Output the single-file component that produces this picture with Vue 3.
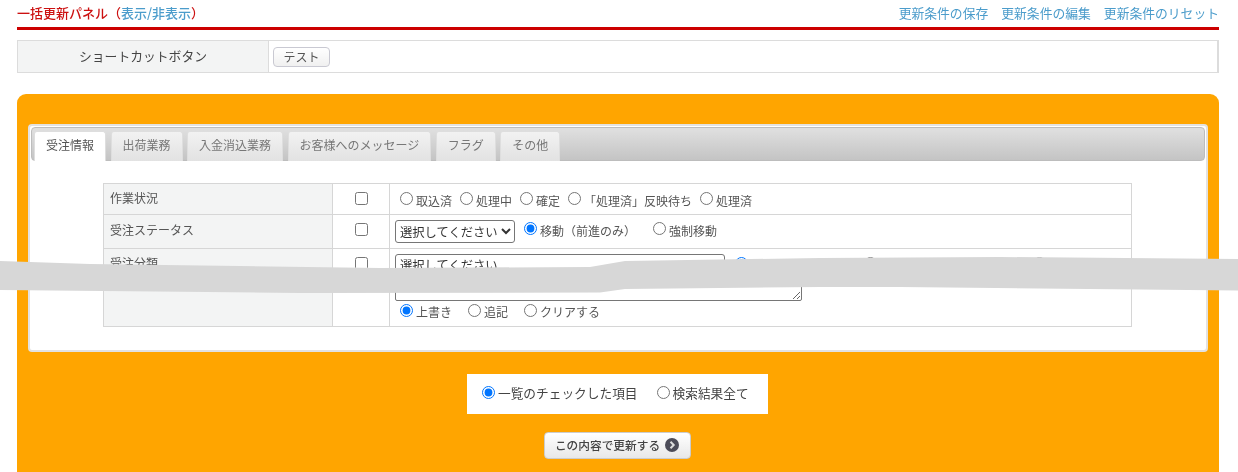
<script setup>
const tabs = ['受注情報', '出荷業務', '入金消込業務', 'お客様へのメッセージ', 'フラグ', 'その他']
const links = ['更新条件の保存', '更新条件の編集', '更新条件のリセット']
const workStates = ['取込済', '処理中', '確定', '「処理済」反映待ち', '処理済']
const writeModes = [
  { label: '上書き', checked: true },
  { label: '追記', checked: false },
  { label: 'クリアする', checked: false }
]
</script>

<template>
  <div class="page">
    <header class="head">
      <h1 class="title">一括更新パネル（<a class="link">表示/非表示</a>）</h1>
      <nav class="links"><a v-for="l in links" :key="l" class="link">{{ l }}</a></nav>
    </header>

    <div class="shortcut">
      <div class="shortcut-label">ショートカットボタン</div>
      <div class="shortcut-body"><button class="test-btn">テスト</button></div>
    </div>

    <section class="panel">
      <div class="card">
        <div class="tabbar">
          <div v-for="(t, i) in tabs" :key="t" class="tab" :class="{ active: i === 0 }">{{ t }}</div>
        </div>
        <table class="form">
          <colgroup><col class="c1" /><col class="c2" /><col /></colgroup>
          <tbody>
            <tr class="r1">
              <th>作業状況</th>
              <td class="chk"><input type="checkbox" /></td>
              <td class="val">
                <label v-for="s in workStates" :key="s" class="opt"><input type="radio" name="work" /><span>{{ s }}</span></label>
              </td>
            </tr>
            <tr class="r2">
              <th>受注ステータス</th>
              <td class="chk"><input type="checkbox" /></td>
              <td class="val">
                <select class="sel"><option>選択してください</option></select>
                <label class="opt wide"><input type="radio" name="st" checked /><span>移動（前進のみ）</span></label>
                <label class="opt"><input type="radio" name="st" /><span>強制移動</span></label>
              </td>
            </tr>
            <tr class="r3">
              <th>受注分類</th>
              <td class="chk"><input type="checkbox" /></td>
              <td class="val">
                <div class="line">
                  <div class="box">選択してください</div>
                  <input type="radio" name="cl" class="r-a" checked />
                  <input type="radio" name="cl" class="r-b" />
                  <input type="radio" name="cl" class="r-c" />
                </div>
                <textarea class="area"></textarea>
                <div class="modes">
                  <label v-for="m in writeModes" :key="m.label" class="opt"><input type="radio" name="mode" :checked="m.checked" /><span>{{ m.label }}</span></label>
                </div>
              </td>
            </tr>
          </tbody>
        </table>
      </div>

      <div class="scope">
        <label class="opt"><input type="radio" name="scope" checked /><span>一覧のチェックした項目</span></label>
        <label class="opt"><input type="radio" name="scope" /><span>検索結果全て</span></label>
      </div>

      <button class="submit">
        <span class="submit-text">この内容で更新する</span>
        <svg width="14" height="14" viewBox="0 0 14 14"><circle cx="7" cy="7" r="7" fill="#4c4c58" /><path d="M5.500 3.800 8.700 7 5.500 10.200" fill="none" stroke="#ddd" stroke-width="2" /></svg>
      </button>
    </section>

    <svg class="band" width="1238" height="472" viewBox="0 0 1238 472">
      <path d="M0 261 90 264 380 268 590 267 625 261 820 258 1000 257 1238 259V290.500L900 287 820 287 625 289 600 292.500 300 293 0 290Z" fill="#d7d7d7" />
    </svg>
  </div>
</template>

<style>
html, body { margin: 0; overflow: hidden; background: #fff; }
</style>

<style scoped>
.page {
  position: relative;
  width: 1238px;
  height: 472px;
  overflow: hidden;
  padding: 0 19px 0 17px;
  box-sizing: border-box;
  font-family: "Noto Sans CJK JP", "Liberation Sans", sans-serif;
  font-size: 12px;
  color: #555;
  filter: blur(0.45px);
}
.head {
  display: flex;
  justify-content: space-between;
  align-items: flex-start;
  height: 27px;
  border-bottom: 3px solid #cc0000;
}
.title { margin: 0; font-size: 13px; font-weight: 500; color: #cc1111; line-height: 26px; }
.link { color: #4b9ccb; }
.links { display: flex; gap: 13px; font-size: 12.800px; line-height: 26px; }
.shortcut {
  display: flex;
  height: 33px;
  box-sizing: border-box;
  margin-top: 10px;
  border: 1px solid #dcdcdc;
  border-right-width: 2px;
}
.shortcut-label {
  width: 250px;
  border-right: 1px solid #dcdcdc;
  background: #f3f4f4;
  text-align: center;
  font-size: 12.800px;
  line-height: 30px;
  color: #444;
}
.shortcut-body { display: flex; align-items: center; padding: 0 0 0 4px; }
.test-btn {
  width: 57px;
  height: 20px;
  padding: 0;
  border: 1px solid #c9c9d2;
  border-radius: 4px;
  background: linear-gradient(#fff, #f0f0f0);
  color: #555;
  font: inherit;
  font-size: 12px;
  line-height: 16px;
}
.panel {
  display: flex;
  flex-direction: column;
  align-items: center;
  margin-top: 21px;
  padding: 30px 11px 60px;
  background: #ffa500;
  border-radius: 9px;
}
.card {
  align-self: stretch;
  box-sizing: border-box;
  height: 228px;
  padding: 1px;
  background: #fff;
  border: 2px solid #e2e2e2;
  border-radius: 4px;
}
.tabbar {
  display: flex;
  gap: 4.500px;
  height: 34px;
  box-sizing: border-box;
  padding: 3px 0 0 2px;
  background: linear-gradient(#e0e0e0, #c4c4c4);
  border: 1px solid #bdbdbd;
  border-radius: 4px;
}
.tab {
  padding: 0 11px;
  height: 30px;
  line-height: 26px;
  box-sizing: border-box;
  border-radius: 3px 3px 0 0;
  background: linear-gradient(#f2f2f2, #e2e2e2);
  border: 1px solid #dedede;
  border-bottom: 0;
  color: #777;
  font-size: 12px;
  white-space: nowrap;
}
.tab.active { background: #fff; color: #555; }
.form {
  width: 1029px;
  margin: 22px 0 0 72px;
  border-collapse: collapse;
  table-layout: fixed;
}
.c1 { width: 229px; }
.c2 { width: 57px; }
.form th, .form td { border: 1px solid #d6d6d6; padding: 0; box-sizing: border-box; }
.form th {
  background: #f3f4f4;
  text-align: left;
  vertical-align: top;
  padding: 5px 6px;
  font-weight: 400;
  color: #555;
  line-height: 18px;
}
.r2 th { padding-top: 6px; }
.form .chk { text-align: center; vertical-align: top; padding-top: 5px; }
.form .chk input { margin: 3px 0 0; width: 13px; height: 13px; }
.form .val { padding: 0 5px; }
.r1 { height: 31px; }
.r2 { height: 34px; }
.r3 { height: 78px; }
.r1 .val { padding-left: 10px; }
.r3 .val { vertical-align: top; padding-top: 5px; }
.opt { display: inline-flex; align-items: center; margin-right: 8px; }
.opt input { margin: 0 3px 2px 0; width: 13px; height: 13px; }
.opt span { padding-top: 3px; }
.opt.wide { margin-left: 9px; margin-right: 17px; }
.r2 .opt input { margin-bottom: 4px; }
.r2 .opt span { padding-top: 1px; }
.sel {
  width: 120px;
  height: 23px;
  font: inherit;
  font-size: 12.300px;
  color: #333;
  border: 1px solid #767676;
  border-radius: 3px;
  background: #fff;
  vertical-align: middle;
}
.line { display: flex; align-items: flex-start; height: 23px; }
.box {
  width: 330px;
  height: 23px;
  flex: none;
  box-sizing: border-box;
  border: 1px solid #767676;
  border-radius: 3px;
  padding: 1px 4px;
  font-size: 12.300px;
  color: #333;
  background: #fff;
}
.line input { margin: 3px 0 0; width: 13px; height: 13px; flex: none; }
.line .r-a { margin-left: 10px; }
.line .r-b { margin-left: 116px; }
.line .r-c { margin-left: 156px; }
.area {
  display: block;
  width: 407px;
  height: 24px;
  box-sizing: border-box;
  border: 1px solid #767676;
  border-radius: 2px;
  margin: 0;
}
.modes { display: flex; padding: 0 0 0 5px; line-height: 18px; height: 20px; }
.modes .opt { margin-right: 16px; }
.modes .opt input { margin-bottom: 1px; }
.modes .opt span { padding-top: 1px; }
.scope {
  display: flex;
  align-items: center;
  gap: 19px;
  box-sizing: border-box;
  width: 301px;
  height: 40px;
  margin: 22px 1px 0 0;
  padding: 0 0 3px 15px;
  background: #fff;
  font-size: 12.700px;
  color: #444;
}
.scope .opt { margin: 0; }
.scope .opt input { margin: 0 3px 0 0; }
.scope .opt span { padding-top: 0; }
.submit {
  display: flex;
  align-items: center;
  justify-content: center;
  gap: 5px;
  width: 147px;
  height: 27px;
  margin: 18px 1px 0 0;
  padding: 0 1px 2px 0;
  border: 1px solid #ccc;
  border-radius: 4px;
  background: linear-gradient(#fff, #e8e8e8);
  color: #444;
  font: inherit;
  font-size: 11.700px;
  font-weight: 500;
}
.band { position: absolute; top: 0; left: 0; }
</style>
